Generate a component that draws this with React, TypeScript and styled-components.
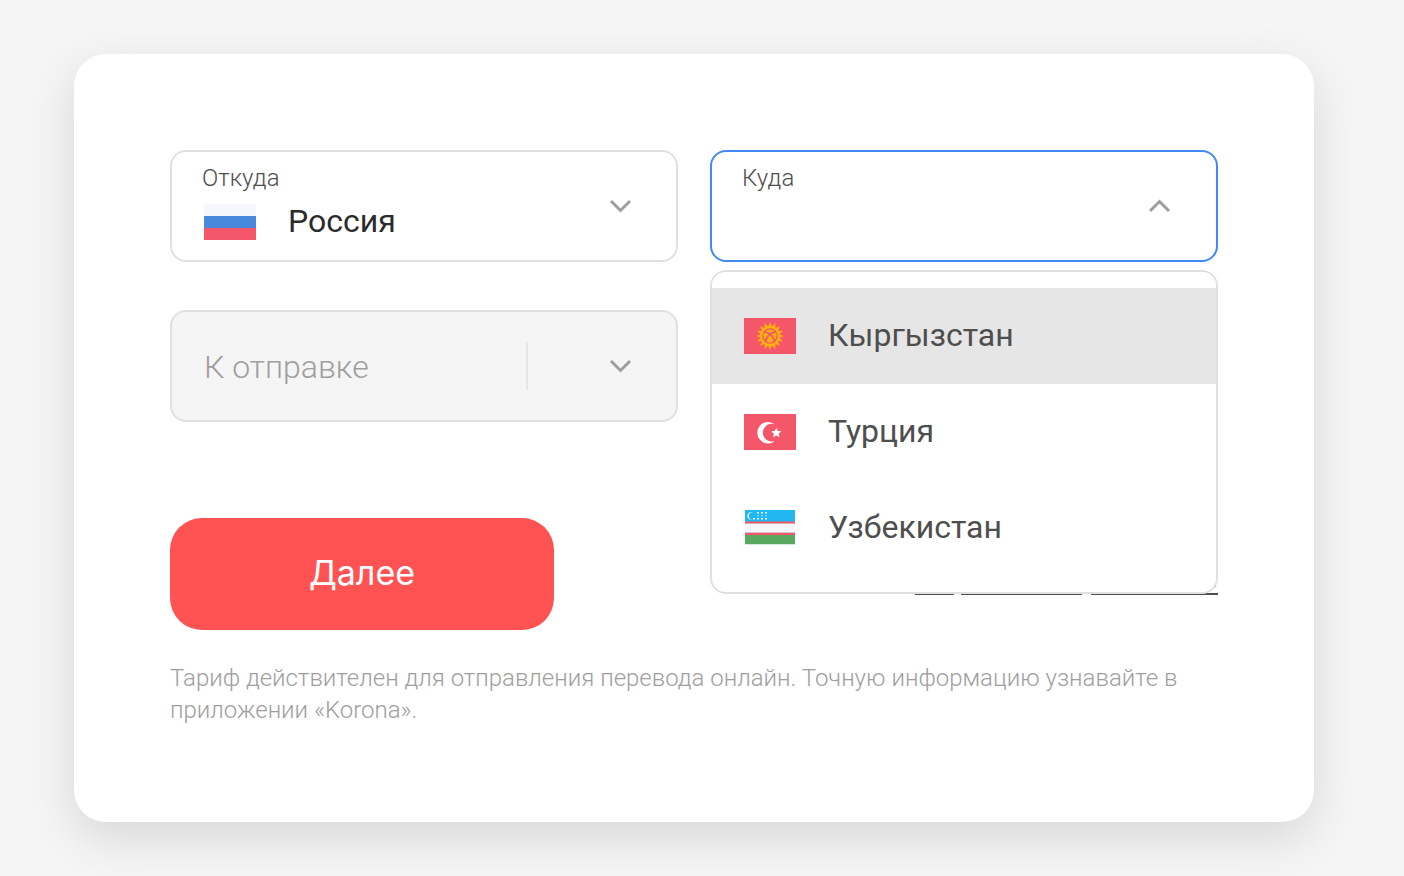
import React, { useState } from "react";
import styled, { createGlobalStyle, css } from "styled-components";

const GlobalStyle = createGlobalStyle`
  *, *::before, *::after { box-sizing: border-box; }
  body {
    margin: 0;
    background: #f5f5f5;
    font-family: Roboto, "Noto Sans", sans-serif;
    color: #2b2b2b;
  }
  button, input, select { font: inherit; color: inherit; }
`;

const Page = styled.main`
  padding: 54px 90px 54px 74px;
`;

const Card = styled.form`
  padding: 96px;
  border-radius: 32px;
  background: #fff;
  box-shadow: 0 16px 48px rgba(0, 0, 0, 0.12);
`;

const Fields = styled.div`
  display: grid;
  grid-template-columns: repeat(2, minmax(0, 1fr));
  gap: 48px 32px;
`;

const FieldSlot = styled.div`
  position: relative;
`;

const frame = css`
  width: 100%;
  height: 112px;
  border: 2px solid #e0e0e0;
  border-radius: 16px;
  background: #fff;
`;

const Field = styled.div<{ $disabled?: boolean }>`
  ${frame}
  display: flex;
  align-items: center;
  padding: 0 44px 0 30px;
  ${(p) => p.$disabled && "background: #f5f5f5; padding-left: 32px;"}
`;

const Stack = styled.div`
  flex: 1;
  min-width: 0;
  display: flex;
  flex-direction: column;
  align-self: stretch;
  padding-top: 10px;
`;

const Label = styled.label`
  font-size: 24px;
  line-height: 32px;
  font-weight: 300;
  color: #4e4e4e;
`;

const ValueRow = styled.div`
  display: flex;
  align-items: center;
  gap: 32px;
  padding: 10px 0 0 2px;
`;

const Select = styled.select`
  flex: 1;
  min-width: 0;
  height: 36px;
  padding: 0 0 3px;
  border: 0;
  outline: 0;
  appearance: none;
  background: transparent;
  font-size: 32px;
  line-height: 32px;
`;

const OpenField = styled.button<{ $open: boolean }>`
  ${frame}
  display: flex;
  align-items: center;
  padding: 0 44px 0 30px;
  border-color: ${(p) => (p.$open ? "#4289f7" : "#e0e0e0")};
  text-align: left;
  outline: 0;
`;

const Caption = styled(Label).attrs({ as: "span" })``;

const Menu = styled.ul`
  position: absolute;
  z-index: 1;
  top: 120px;
  left: 0;
  right: 0;
  margin: 0;
  padding: 16px 0;
  list-style: none;
  border: 2px solid #e0e0e0;
  border-radius: 16px;
  background: #fff;
`;

const Option = styled.li<{ $active: boolean }>`
  display: flex;
  align-items: center;
  gap: 32px;
  height: 96px;
  padding: 0 32px;
  font-size: 32px;
  line-height: 40px;
  color: #4e4e4e;
  background: ${(p) => (p.$active ? "#e6e6e6" : "transparent")};
  cursor: pointer;
`;

const OptionName = styled.span`
  padding-bottom: 2px;
`;

const AmountInput = styled.input`
  flex: 1;
  min-width: 0;
  height: 48px;
  padding: 2px 0 0;
  border: 0;
  border-right: 2px solid #e6e6e6;
  background: transparent;
  font-size: 32px;
  font-weight: 300;
  &::placeholder { color: #9e9e9e; opacity: 1; }
`;

const CurrencyButton = styled.button`
  display: flex;
  justify-content: flex-end;
  width: 104px;
  padding: 0;
  border: 0;
  background: transparent;
`;

const ChevronIcon = styled.svg`
  flex: none;
  display: block;
  width: 24px;
  height: 16px;
  fill: none;
  stroke: #9e9e9e;
  stroke-width: 3;
`;

const FlagIcon = styled.svg`
  flex: none;
  display: block;
  width: 52px;
  height: 36px;
`;

const Actions = styled.div`
  display: flex;
  align-items: center;
  justify-content: space-between;
  margin-top: 96px;
`;

const Submit = styled.button`
  width: 384px;
  height: 112px;
  padding: 0 0 4px;
  border: 0;
  border-radius: 32px;
  background: #ff5353;
  color: #fff;
  font-family: Inter, "Open Sans", sans-serif;
  font-size: 34px;
  font-weight: 400;
`;

const TermsLink = styled.a`
  padding-top: 2px;
  font-family: Inter, "Open Sans", sans-serif;
  font-size: 34px;
  line-height: 40px;
  color: #4e4e4e;
  text-decoration-thickness: 2px;
  text-underline-offset: 6px;
`;

const Note = styled.p`
  margin: 32px 0 0;
  font-size: 24px;
  line-height: 32px;
  font-weight: 300;
  color: #9e9e9e;
`;

function Chevron({ up = false }: { up?: boolean }) {
  return (
    <ChevronIcon viewBox="0 0 24 16" aria-hidden="true">
      <path d={up ? "M2 13 11.500 3.500l9.500 9.500" : "M3 3l9.500 9.500 9.500-9.500"} />
    </ChevronIcon>
  );
}

function RussiaFlag() {
  return (
    <FlagIcon viewBox="0 0 52 36" aria-hidden="true">
      <path fill="#f5f7fc" d="M0 0h52v12H0z" />
      <path fill="#4989dc" d="M0 12h52v12H0z" />
      <path fill="#f45769" d="M0 24h52v12H0z" />
    </FlagIcon>
  );
}

const sunPoints = Array.from({ length: 32 }, (_, i) => {
  const angle = (i * Math.PI) / 16;
  const radius = i % 2 ? 9.6 : 14;
  return `${26 + radius * Math.sin(angle)},${18 - radius * Math.cos(angle)}`;
}).join(" ");

function KyrgyzstanFlag() {
  return (
    <FlagIcon viewBox="0 0 52 36" aria-hidden="true">
      <path fill="#f45769" d="M0 0h52v36H0z" />
      <polygon fill="#fdb00d" points={sunPoints} />
      <circle cx="26" cy="18" r="7.800" fill="#f45769" />
      <g fill="#fdb00d">
        <path d="M21 13.300Q26 9.500 31 13.300Q28 13.600 26 15Q24 13.600 21 13.300Z" />
        <path d="M26 17.200Q28.600 19.700 29.600 23.200Q26 25.800 22.400 23.200Q23.400 19.700 26 17.200Z" />
        <path d="M19.800 15Q22.600 14.900 24.600 16.100Q22.400 18.300 21.200 21.800Q18.600 18.600 19.800 15Z" />
        <path d="M32.200 15Q29.400 14.900 27.400 16.100Q29.600 18.300 30.800 21.800Q33.400 18.600 32.200 15Z" />
      </g>
    </FlagIcon>
  );
}

function TurkeyFlag() {
  return (
    <FlagIcon viewBox="0 0 52 36" aria-hidden="true">
      <path fill="#f45769" d="M0 0h52v36H0z" />
      <path fill="#fff" d="M31 27A10.800 10.800 0 1 1 31 10.400A8.900 8.900 0 1 0 31 27Z" />
      <path fill="#fff" d="M32.300 13.700l1.500 3.200 3.500.4-2.500 2.400.6 3.500-3.100-1.700-3.100 1.700.6-3.500-2.500-2.400 3.500-.4z" />
    </FlagIcon>
  );
}

function UzbekistanFlag() {
  return (
    <FlagIcon viewBox="0 0 52 36" aria-hidden="true">
      <path fill="#21b8f1" d="M1 0h50v12H1z" />
      <path fill="#f45769" d="M1 11.500h50v14H1z" />
      <path fill="#b9a6a6" d="M1 13.200h50v.8H1zM1 22.200h50v.8H1z" />
      <path fill="#f5f7fc" d="M1 13.700h50v8.700H1z" />
      <path fill="#58a862" d="M1 25h50v9.300H1z" />
      <path fill="#fff" d="M8.500 9.600A3.900 3.900 0 1 1 8.500 2.200A3.200 3.200 0 1 0 8.500 9.600Z" />
      <g fill="#e6f7ff">
        <path d="M13 2h2v1.500H13zM17 2h2v1.500H17zM21 2h2v1.500H21z" />
        <path d="M13 5h2v1.300H13zM17 5h2v1.300H17zM21 5h2v1.300H21z" opacity=".45" />
        <path d="M9 8h2v1.500H9zM13 8h2v1.500H13zM17 8h2v1.500H17zM21 8h2v1.500H21z" />
      </g>
    </FlagIcon>
  );
}

const countries = [
  { name: "Кыргызстан", Flag: KyrgyzstanFlag },
  { name: "Турция", Flag: TurkeyFlag },
  { name: "Узбекистан", Flag: UzbekistanFlag },
];

export default function App() {
  const [open, setOpen] = useState(true);
  const [active, setActive] = useState(0);

  return (
    <>
      <GlobalStyle />
      <Page>
        <Card onSubmit={(e) => e.preventDefault()}>
          <Fields>
            <Field>
              <Stack>
                <Label htmlFor="from">Откуда</Label>
                <ValueRow>
                  <RussiaFlag />
                  <Select id="from" defaultValue="ru">
                    <option value="ru">Россия</option>
                  </Select>
                </ValueRow>
              </Stack>
              <Chevron />
            </Field>

            <FieldSlot>
              <OpenField
                type="button"
                $open={open}
                aria-haspopup="listbox"
                aria-expanded={open}
                aria-controls="to-options"
                onClick={() => setOpen(!open)}
              >
                <Stack>
                  <Caption>Куда</Caption>
                </Stack>
                <Chevron up={open} />
              </OpenField>
              {open && (
                <Menu id="to-options" role="listbox" aria-label="Куда">
                  {countries.map(({ name, Flag }, i) => (
                    <Option
                      key={name}
                      role="option"
                      aria-selected={i === active}
                      $active={i === active}
                      onMouseEnter={() => setActive(i)}
                    >
                      <Flag />
                      <OptionName>{name}</OptionName>
                    </Option>
                  ))}
                </Menu>
              )}
            </FieldSlot>

            <Field $disabled>
              <AmountInput aria-label="К отправке" placeholder="К отправке" disabled />
              <CurrencyButton type="button" aria-label="Валюта" disabled>
                <Chevron />
              </CurrencyButton>
            </Field>
          </Fields>

          <Actions>
            <Submit type="submit">Далее</Submit>
            <TermsLink href="#terms">Тарифы и условия</TermsLink>
          </Actions>

          <Note>
            Тариф действителен для отправления перевода онлайн. Точную информацию узнавайте в
            приложении «Korona».
          </Note>
        </Card>
      </Page>
    </>
  );
}
